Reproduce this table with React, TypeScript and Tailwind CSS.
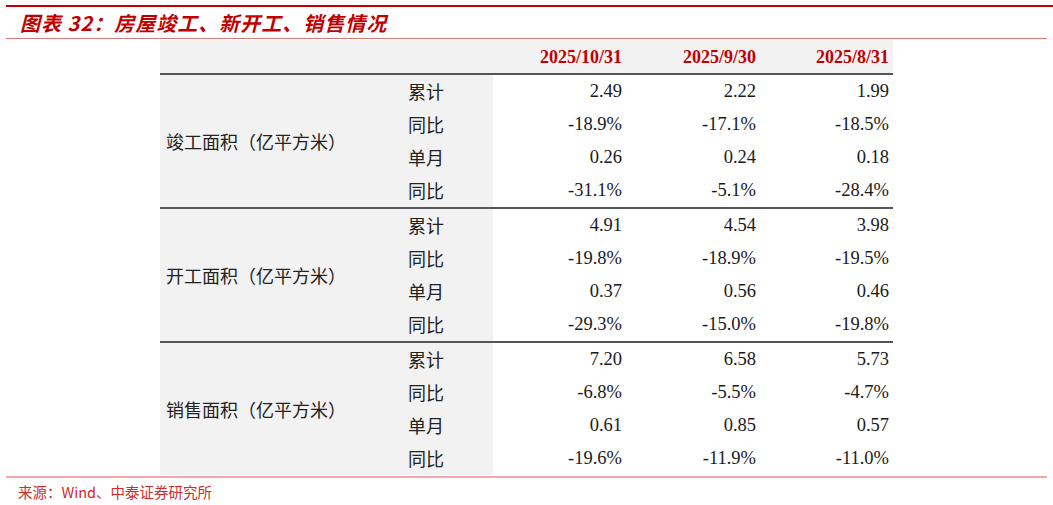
import React from "react";

const DATES = ["2025/10/31", "2025/9/30", "2025/8/31"];

const GROUPS = [
  {
    label: "竣工面积（亿平方米）",
    rows: [
      { name: "累计", values: ["2.49", "2.22", "1.99"] },
      { name: "同比", values: ["-18.9%", "-17.1%", "-18.5%"] },
      { name: "单月", values: ["0.26", "0.24", "0.18"] },
      { name: "同比", values: ["-31.1%", "-5.1%", "-28.4%"] },
    ],
  },
  {
    label: "开工面积（亿平方米）",
    rows: [
      { name: "累计", values: ["4.91", "4.54", "3.98"] },
      { name: "同比", values: ["-19.8%", "-18.9%", "-19.5%"] },
      { name: "单月", values: ["0.37", "0.56", "0.46"] },
      { name: "同比", values: ["-29.3%", "-15.0%", "-19.8%"] },
    ],
  },
  {
    label: "销售面积（亿平方米）",
    rows: [
      { name: "累计", values: ["7.20", "6.58", "5.73"] },
      { name: "同比", values: ["-6.8%", "-5.5%", "-4.7%"] },
      { name: "单月", values: ["0.61", "0.85", "0.57"] },
      { name: "同比", values: ["-19.6%", "-11.9%", "-11.0%"] },
    ],
  },
];

const CJK = "font-['Microsoft_YaHei','Noto_Sans_CJK_SC',sans-serif]";
const SERIF = "font-['Liberation_Serif','Times_New_Roman',serif]";

export default function App() {
  return (
    <div className="w-[1053px] h-[505px] bg-white overflow-hidden">
      {/* top rule */}
      <div className="ml-[6px] mt-[5px] h-[2px] bg-[#c00000]" />

      {/* title */}
      <div
        className={`pl-[20px] h-[31px] flex items-center text-[20px] font-bold italic tracking-[1px] text-[#c00000] ${CJK}`}
      >
        图表 32：房屋竣工、新开工、销售情况
      </div>
      <div className="mx-[6px] h-px bg-[#d77a7a]" />

      {/* table */}
      <div className="ml-[160px] w-[733px] mt-[1px]">
        <div className="grid grid-cols-[333px_133px_134px_133px] h-[35px] bg-[#f2f2f2] border-b-2 border-[#555]">
          <div />
          {DATES.map((d) => (
            <div
              key={d}
              className={`flex items-center justify-end pr-[4px] pt-[2px] text-[18px] font-bold text-[#c00000] ${SERIF}`}
            >
              {d}
            </div>
          ))}
        </div>

        {GROUPS.map((g, gi) => (
          <div
            key={g.label}
            className={`grid grid-cols-[235px_98px_400px] ${gi < GROUPS.length - 1 ? "border-b-2 border-[#555]" : ""}`}
          >
            <div className={`bg-[#f2f2f2] flex items-center pl-[6px] text-[18px] text-[#222] ${CJK}`}>
              {g.label}
            </div>
            <div className="bg-[#f2f2f2]">
              {g.rows.map((r, ri) => (
                <div
                  key={ri}
                  className={`h-[33px] flex items-center pl-[13px] text-[18px] text-[#222] ${CJK}`}
                >
                  {r.name}
                </div>
              ))}
            </div>
            <div>
              {g.rows.map((r, ri) => (
                <div key={ri} className="h-[33px] grid grid-cols-[133px_134px_133px]">
                  {r.values.map((v, vi) => (
                    <div
                      key={vi}
                      className={`flex items-center justify-end pr-[4px] text-[18.5px] text-[#1a1a1a] ${SERIF}`}
                    >
                      {v}
                    </div>
                  ))}
                </div>
              ))}
            </div>
          </div>
        ))}
      </div>

      {/* bottom rule and source */}
      <div className="mx-[6px] mt-[1px] h-[2px] bg-[#f4a7a7]" />
      <div className={`pl-[18px] pt-[3px] text-[14.5px] text-[#d02b2b] ${CJK}`}>
        来源：Wind、中泰证券研究所
      </div>
    </div>
  );
}
